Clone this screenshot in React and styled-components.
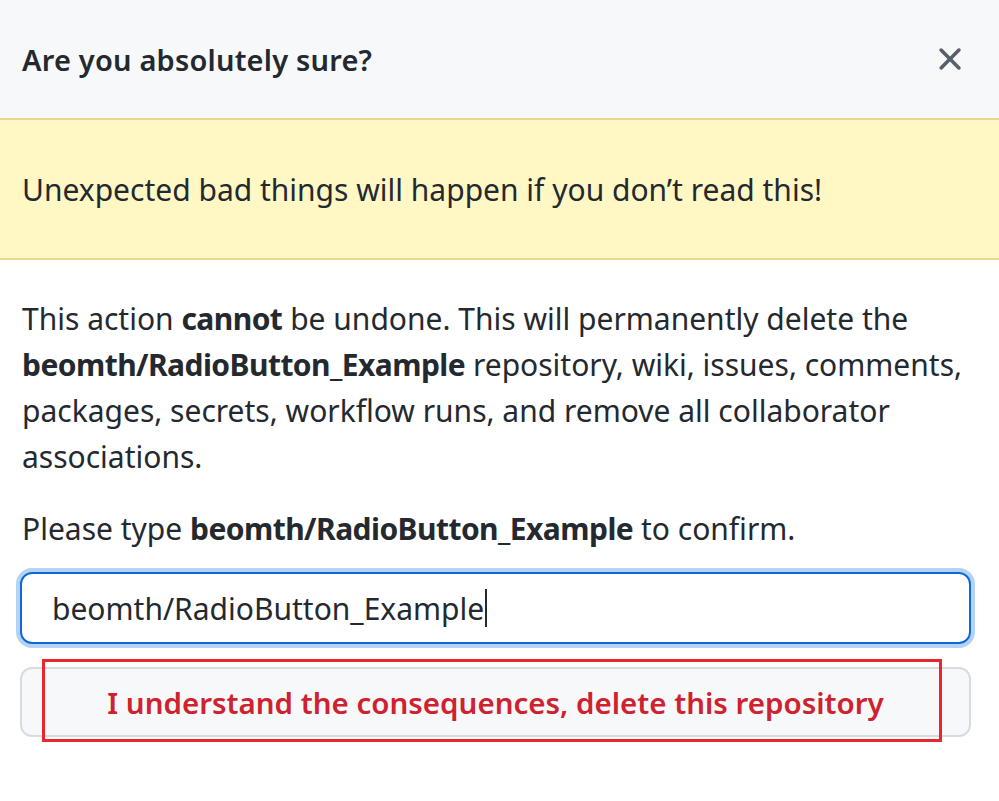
import React from "react";
import styled, { createGlobalStyle } from "styled-components";

const Global = createGlobalStyle`
  html, body { margin: 0; padding: 0; background: #ffffff; }
  body { font-family: "Noto Sans", "Open Sans", sans-serif; color: #24292f; }
`;

const Dialog = styled.div`
  width: 999px;
  height: 801px;
  background: #ffffff;
  display: flex;
  flex-direction: column;
`;

const Header = styled.div`
  height: 118px;
  box-sizing: border-box;
  background: #f6f8fa;
  display: flex;
  align-items: center;
  justify-content: space-between;
  padding: 0 30px 0 22px;
`;

const Title = styled.h1`
  margin: 0;
  font-size: 29px;
  font-weight: 600;
  color: #24292f;
  letter-spacing: 0.2px;
`;

const Close = styled.button`
  border: 0;
  background: transparent;
  padding: 0;
  width: 38px;
  height: 38px;
  display: flex;
  align-items: center;
  justify-content: center;
  color: #57606a;
  cursor: pointer;
`;

const Flash = styled.div`
  height: 142px;
  box-sizing: border-box;
  background: #fff8c5;
  border-top: 2px solid #ead68f;
  border-bottom: 2px solid #ead68f;
  display: flex;
  align-items: center;
  padding: 0 22px;
  font-size: 30px;
  color: #24292f;
`;

const Body = styled.div`
  padding: 36px 28px 0 20px;
  display: flex;
  flex-direction: column;
`;

const Para = styled.p`
  margin: 0 0 0 2px;
  font-size: 30px;
  line-height: 46px;
  color: #24292f;
`;

const Strong = styled.b`
  font-weight: 700;
  letter-spacing: -0.55px;
`;

const Confirm = styled(Para)`
  margin-top: 26px;
`;

const InputWrap = styled.div`
  margin-top: 20px;
  height: 72px;
  box-sizing: border-box;
  border: 2px solid #0969da;
  border-radius: 12px;
  box-shadow: 0 0 0 4px rgba(9, 105, 218, 0.3);
  display: flex;
  align-items: center;
  padding: 0 30px;
  font-size: 30px;
  color: #24292f;
`;

const Caret = styled.span`
  display: inline-block;
  width: 2px;
  height: 38px;
  background: #24292f;
  margin-left: 1px;
  vertical-align: middle;
`;

const ButtonArea = styled.div`
  position: relative;
  margin-top: 23px;
`;

const DangerButton = styled.button`
  width: 100%;
  height: 70px;
  box-sizing: border-box;
  background: #f6f8fa;
  border: 2px solid #d8dce1;
  border-radius: 12px;
  color: #cf222e;
  font-family: "Noto Sans", "Open Sans", sans-serif;
  font-size: 29.5px;
  font-weight: 600;
  display: flex;
  align-items: center;
  justify-content: center;
`;

const Highlight = styled.div`
  position: absolute;
  left: 22px;
  top: -8px;
  width: 900px;
  height: 83px;
  box-sizing: border-box;
  border: 3px solid #e8262c;
  pointer-events: none;
`;

export default function App() {
  return (
    <>
      <Global />
      <Dialog>
        <Header>
          <Title>Are you absolutely sure?</Title>
          <Close aria-label="Close">
            <svg width="38" height="38" viewBox="0 0 16 16" fill="currentColor">
              <path d="M3.72 3.72a.75.75 0 0 1 1.06 0L8 6.94l3.22-3.22a.749.749 0 0 1 1.275.326.749.749 0 0 1-.215.734L9.06 8l3.22 3.22a.749.749 0 0 1-.326 1.275.749.749 0 0 1-.734-.215L8 9.06l-3.22 3.22a.751.751 0 0 1-1.042-.018.751.751 0 0 1-.018-1.042L6.94 8 3.72 4.78a.75.75 0 0 1 0-1.06Z" />
            </svg>
          </Close>
        </Header>
        <Flash>Unexpected bad things will happen if you don’t read this!</Flash>
        <Body>
          <Para>
            This action <Strong>cannot</Strong> be undone. This will permanently delete the{" "}
            <Strong>beomth/RadioButton_Example</Strong> repository, wiki, issues, comments,
            packages, secrets, workflow runs, and remove all collaborator associations.
          </Para>
          <Confirm>
            Please type <Strong>beomth/RadioButton_Example</Strong> to confirm.
          </Confirm>
          <InputWrap>
            beomth/RadioButton_Example<Caret />
          </InputWrap>
          <ButtonArea>
            <DangerButton>I understand the consequences, delete this repository</DangerButton>
            <Highlight />
          </ButtonArea>
        </Body>
      </Dialog>
    </>
  );
}
